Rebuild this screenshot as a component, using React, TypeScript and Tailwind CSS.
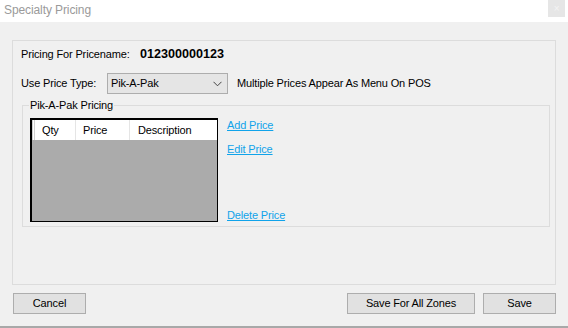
import React from "react";

const font = { fontFamily: '"Liberation Sans", Arial, sans-serif' };

export default function App() {
  return (
    <div className="w-[568px] h-[328px] bg-white flex flex-col overflow-hidden relative text-[11px] tracking-[-0.15px] whitespace-nowrap text-black" style={font}>
      {/* title bar */}
      <div className="h-[22px] shrink-0 bg-white flex items-center pl-[4px] text-[12px] tracking-[-0.1px] text-[#9a9a9a] relative">
        <span className="leading-none -mt-[3px]">Specialty Pricing</span>
        <div className="absolute right-[3px] top-0 w-[17px] h-[17px] bg-[#e6e6e6] flex items-center justify-center text-[10px] text-[#f4f4f4]">×</div>
      </div>
      {/* body */}
      <div className="flex-1 bg-[#f0f0f0] flex flex-col px-[12px] pt-[18px] border-b-2 border-[#a8a8a8]">
        <div className="h-[245px] border border-[#dcdcdc] flex flex-col pt-[5px]">
          <div className="flex items-center h-[16px] pl-[8px]">
            <span className="w-[119px]">Pricing For Pricename:</span>
            <span className="font-bold text-[12.6px] tracking-normal">012300000123</span>
          </div>
          <div className="flex items-center h-[21px] mt-[11px] pl-[8px]">
            <span className="w-[86px]">Use Price Type:</span>
            <div className="w-[121px] h-[21px] bg-[#e5e5e5] border border-[#adadad] flex items-center justify-between pl-[3px] pr-[5px]">
              <span>Pik-A-Pak</span>
              <svg width="9" height="6" viewBox="0 0 9 6"><path d="M0.5 0.8 L4.5 4.8 L8.5 0.8" fill="none" stroke="#444" strokeWidth="1" /></svg>
            </div>
            <span className="ml-[9px]">Multiple Prices Appear As Menu On POS</span>
          </div>
          <div className="relative mt-[11px] ml-[9px] mr-[5px] h-[122px] border border-[#dcdcdc] flex pl-[7px] pt-[12px]">
            <span className="absolute left-[6px] -top-[8px] px-[1px] bg-[#f0f0f0] leading-[15px]">Pik-A-Pak Pricing</span>
            <div className="w-[188px] h-[104px] border-t-2 border-l-2 border-r border-b border-black bg-[#ababab] flex flex-col">
              <div className="h-[20px] bg-white flex items-center">
                <div className="w-[3px] h-full border-r border-[#d0d0d0] border-l border-l-[#d0d0d0]"></div>
                <div className="w-[41px] h-full border-r border-[#e5e5e5] flex items-center pl-[7px]">Qty</div>
                <div className="w-[54px] h-full border-r border-[#e5e5e5] flex items-center pl-[7px]">Price</div>
                <div className="flex-1 h-full flex items-center pl-[8px]">Description</div>
              </div>
            </div>
            <div className="ml-[9px] h-[104px] flex flex-col text-[#10a3ea] underline">
              <span className="leading-[14px]">Add Price</span>
              <span className="leading-[14px] mt-[10px]">Edit Price</span>
              <span className="leading-[14px] mt-auto mb-[0px]">Delete Price</span>
            </div>
          </div>
        </div>
        <div className="flex mt-[8px] h-[21px]">
          <button className="ml-[1px] w-[73px] h-[21px] bg-[#e1e1e1] border border-[#adadad] flex items-center justify-center">Cancel</button>
          <button className="ml-auto w-[128px] h-[21px] bg-[#e1e1e1] border border-[#adadad] flex items-center justify-center">Save For All Zones</button>
          <button className="ml-[8px] w-[73px] h-[21px] bg-[#e1e1e1] border border-[#adadad] flex items-center justify-center">Save</button>
        </div>
      </div>
    </div>
  );
}
